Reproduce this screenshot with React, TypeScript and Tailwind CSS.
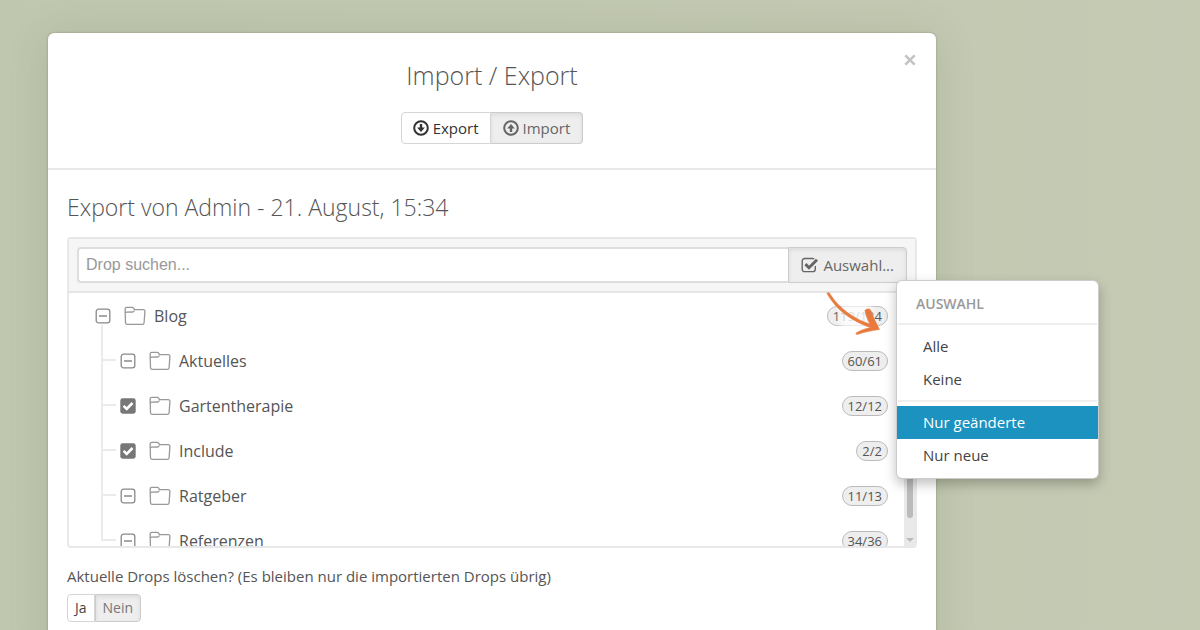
import type { ReactNode } from 'react';

type CheckState = 'checked' | 'partial';

const FOLDERS: { name: string; count: string; state: CheckState }[] = [
  { name: 'Aktuelles', count: '60/61', state: 'partial' },
  { name: 'Gartentherapie', count: '12/12', state: 'checked' },
  { name: 'Include', count: '2/2', state: 'checked' },
  { name: 'Ratgeber', count: '11/13', state: 'partial' },
  { name: 'Referenzen', count: '34/36', state: 'partial' },
];

function ArrowCircle({ up = false }: { up?: boolean }) {
  return (
    <svg viewBox="0 0 16 16" className={up ? 'size-4 rotate-180' : 'size-4'} fill="none" stroke="currentColor" aria-hidden="true">
      <circle cx="8" cy="8" r="6.8" strokeWidth="2" />
      <path d="M8 4v5" strokeWidth="2.4" />
      <path d="M4.1 7.6h7.8L8 12z" fill="currentColor" stroke="none" />
    </svg>
  );
}

function CheckSquare() {
  return (
    <svg viewBox="0 0 18 16" className="h-4 w-[18px]" fill="none" stroke="currentColor" aria-hidden="true">
      <path d="M14.3 9v3.2a2.4 2.4 0 0 1-2.4 2.4H3.6a2.4 2.4 0 0 1-2.4-2.4V3.9a2.4 2.4 0 0 1 2.4-2.4h8.3c.5 0 .9.1 1.3.3" strokeWidth="1.4" />
      <path d="M4.4 7.1l3.6 3.6 8-8" strokeWidth="3" />
    </svg>
  );
}

function Folder() {
  return (
    <svg viewBox="0 0 22 20" className="h-5 w-[22px] shrink-0 text-[#999]" fill="none" stroke="currentColor" strokeWidth="1.3" strokeLinejoin="round" aria-hidden="true">
      <path d="M1.2 6.6V3c0-1 .6-1.6 1.6-1.6h5.400c.8 0 1.200.3 1.600 1l.7 1.200h8.600c1.300 0 2 .8 1.800 2l-.8 11.200c-.1 1-.7 1.600-1.700 1.600H3.200c-1 0-1.600-.6-1.700-1.600z" />
      <path d="M1.2 6.9c.3-.6.9-.8 1.6-.8l5.6-.1c1 0 1.5-.5 2-1.6" />
    </svg>
  );
}

function CheckBox({ state }: { state: CheckState }) {
  return (
    <>
      <input type="checkbox" defaultChecked={state === 'checked'} className="peer sr-only" />
      <svg viewBox="0 0 16 16" className="size-4 shrink-0 bg-white" fill="none" aria-hidden="true">
        {state === 'checked' ? (
          <>
            <rect x="0.3" y="0.3" width="15.4" height="15.4" rx="2.4" fill="#777" />
            <path d="M3.6 7.9l3.1 3.1 5.800-6" stroke="#fff" strokeWidth="2.6" />
          </>
        ) : (
          <>
            <rect x="1.2" y="1.2" width="13.6" height="13.6" rx="2.4" stroke="#888" strokeWidth="1.3" />
            <path d="M4 8h8" stroke="#777" strokeWidth="1.3" />
          </>
        )}
      </svg>
    </>
  );
}

function TreeRow({ name, count, state, faded }: { name: string; count: string; state: CheckState; faded?: boolean }) {
  return (
    <div className="flex h-[45px] items-center justify-between">
      <label className="relative flex items-center">
        <CheckBox state={state} />
        <span className="ml-[13px] flex items-center gap-2">
          <Folder />
          <span>{name}</span>
        </span>
      </label>
      <span className="relative rounded-full border border-[#bbb] bg-[#eee] px-[5px] text-[13px] leading-[18px]">
        {count}
        {/* soft glow behind the hint arrow */}
        {faded && <span className="absolute -inset-y-1 left-3 w-8 bg-white/80 blur-[3px]" />}
      </span>
    </div>
  );
}

function MenuItem({ children, active }: { children: ReactNode; active?: boolean }) {
  return (
    <button
      type="button"
      role="menuitem"
      className={`block h-[33px] w-full px-[26px] text-left ${active ? 'bg-[#1c92c0] text-white' : 'text-[#444]'}`}
    >
      {children}
    </button>
  );
}

function SelectionMenu() {
  return (
    <div
      role="menu"
      className="absolute top-[33px] -right-[192px] z-20 w-[203px] rounded-md border border-black/20 bg-white pb-1.5 text-[15px] shadow-[0_5px_12px_rgba(0,0,0,0.25)]"
    >
      <div className="mx-px mb-[5px] border-b-2 border-[#eee] px-[18px] pt-[3px] text-sm leading-[39px] font-semibold text-[#999]">AUSWAHL</div>
      <MenuItem>Alle</MenuItem>
      <MenuItem>Keine</MenuItem>
      <div className="mx-px my-1 border-t-2 border-[#eee]" />
      <MenuItem active>Nur geänderte</MenuItem>
      <MenuItem>Nur neue</MenuItem>
    </div>
  );
}

function HintArrow() {
  return (
    <svg viewBox="0 0 60 44" className="absolute top-[44px] left-[38px] z-10 h-11 w-[60px]" fill="#e87a3e" stroke="#e87a3e" strokeWidth="0.6" aria-hidden="true">
      <path d="M1 2.5C1.5 1.5 3 1.2 3.5 2.2C13 17.5 28 28.5 47 34L45.5 37C26.5 30.5 10.5 19.500 1 2.500z" />
      <path d="M39 19.5c.6-1.8 4.8-2.2 5.7-.3C47.5 27 50.500 32.500 53.500 38.500C46 39.500 38 41 31 43.500c-.9.2-1.3-1.200-.6-1.700C35 39 40 37.300 45.500 36.500C43 31 39.500 25 39 19.500z" />
    </svg>
  );
}

export default function App() {
  return (
    <div className="h-screen overflow-hidden bg-linear-to-r from-[#bfc7ae] to-[#c5cab3] px-12 pt-[33px] font-['Open_Sans',sans-serif] text-[#555]">
      <main className="relative min-h-screen max-w-[888px] rounded-md bg-white shadow-[0_0_2px_rgba(0,0,0,0.3),0_4px_40px_rgba(70,90,40,0.15)]">
        <button type="button" aria-label="Schließen" className="absolute top-[21px] right-5 text-[#c4c4c4]">
          <svg viewBox="0 0 12 12" className="size-3" stroke="currentColor" strokeWidth="2.6" aria-hidden="true">
            <path d="M1.3 1.3l9.4 9.4M10.7 1.3l-9.400 9.400" />
          </svg>
        </button>

        <header className="flex flex-col items-center border-b-2 border-[#e8e8e8] pt-[26px] pb-6">
          <h1 className="text-[25px] leading-8 font-light">Import / Export</h1>
          <div className="mt-[21px] flex h-8 text-[15px]">
            <button type="button" className="flex items-center gap-1 rounded-l border border-[#d5d5d5] px-[11px] text-[#333]">
              <ArrowCircle />
              Export
            </button>
            <button type="button" className="flex items-center gap-1 rounded-r border border-l-0 border-[#ccc] bg-[#eee] px-3 text-[#666] shadow-[inset_0_2px_4px_rgba(0,0,0,0.08)]">
              <ArrowCircle up />
              Import
            </button>
          </div>
        </header>

        <div className="px-[19px] pt-[21px]">
          <h2 className="text-[23px] leading-8 font-light">Export von Admin - 21. August, 15:34</h2>

          <section className="mt-3.5 rounded border-2 border-[#e8e8e8]">
            <div className="flex border-b-2 border-[#e5e5e5] bg-[#f6f6f6] p-2">
              <input
                type="text"
                aria-label="Drop suchen"
                placeholder="Drop suchen..."
                className="h-9 min-w-0 flex-1 rounded-l border-2 border-r-0 border-[#ddd] bg-white px-[7px] font-['Liberation_Sans',sans-serif] text-base placeholder:text-[#999]"
              />
              <div className="relative">
                <button type="button" className="flex h-9 items-center gap-1 rounded-r border border-[#ccc] bg-[#eee] px-3 text-[15px] text-[#666] shadow-[inset_0_2px_4px_rgba(0,0,0,0.08)]">
                  <CheckSquare />
                  Auswahl...
                </button>
                <HintArrow />
                <SelectionMenu />
              </div>
            </div>

            <div className="flex h-[253px] overflow-hidden">
              <div className="flex-1 pr-4 pl-[26px] text-base">
                <TreeRow name="Blog" count="119/124" state="partial" faded />
                <ul className="ml-[6px]">
                  {FOLDERS.map((folder) => (
                    <li
                      key={folder.name}
                      className="relative pl-[19px] before:absolute before:bottom-[22px] before:left-0 before:h-[46px] before:w-[15px] before:border-b-2 before:border-l-2 before:border-[#ebebeb] first:before:h-9"
                    >
                      <TreeRow {...folder} />
                    </li>
                  ))}
                </ul>
              </div>
              <div className="flex w-[11px] flex-col items-center bg-[#e9e9e9] pb-1" aria-hidden="true">
                <div className="w-1.5 flex-1 rounded bg-[#bbb]" />
                <svg viewBox="0 0 8 4" className="mt-5 h-1 w-2" fill="#bbb">
                  <path d="M0 0h8L4 4z" />
                </svg>
              </div>
            </div>
          </section>

          <fieldset className="mt-4 text-[15px]">
            <legend className="leading-6">Aktuelle Drops löschen? (Es bleiben nur die importierten Drops übrig)</legend>
            <div className="mt-1.5 flex h-7 text-sm">
              <button type="button" className="rounded-l border border-[#d5d5d5] px-[7px] text-[#444]">
                Ja
              </button>
              <button type="button" className="rounded-r border border-[#ccc] bg-[#eee] px-[7px] text-[#777] shadow-[inset_0_2px_4px_rgba(0,0,0,0.08)]">
                Nein
              </button>
            </div>
          </fieldset>
        </div>
      </main>
    </div>
  );
}
